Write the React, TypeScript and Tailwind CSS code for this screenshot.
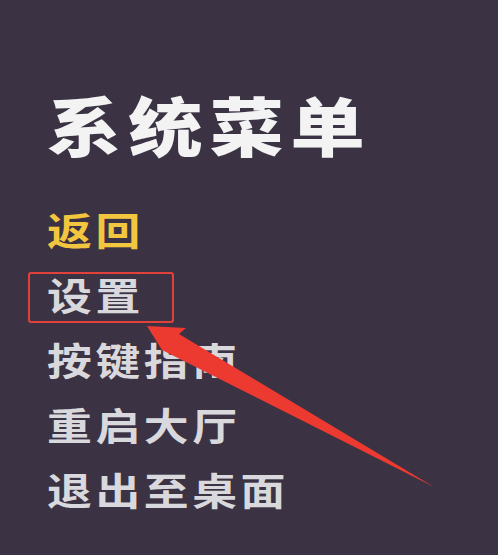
import React from "react";

const items = [
  { label: "返回", color: "text-[#f3c63f]" },
  { label: "设置", color: "text-[#d9d8dc]" },
  { label: "按键指南", color: "text-[#d9d8dc]" },
  { label: "重启大厅", color: "text-[#d9d8dc]" },
  { label: "退出至桌面", color: "text-[#d9d8dc]" },
];

export default function App() {
  return (
    <div
      className="relative w-[498px] h-[555px] overflow-hidden bg-[#3b3343] flex flex-col pl-[47px] pt-[83px]"
      style={{ fontFamily: '"Noto Sans CJK SC", "Noto Sans", sans-serif' }}
    >
      <h1 className="origin-left scale-x-[1.16] text-[64px] leading-[80px] font-black tracking-[6px] text-[#f3f3f3] whitespace-nowrap">
        系统菜单
      </h1>
      <ul className="mt-[33px] flex flex-col">
        {items.map((it) => (
          <li
            key={it.label}
            className={`origin-left scale-x-[1.18] text-[38px] leading-[65px] font-bold tracking-[3px] whitespace-nowrap ${it.color}`}
          >
            {it.label}
          </li>
        ))}
      </ul>

      {/* red highlight box around 设置 */}
      <div className="absolute left-[28px] top-[272px] w-[146px] h-[51px] border-2 border-[#e2413b] rounded-[3px]" />

      {/* red arrow */}
      <svg
        className="absolute left-0 top-0 pointer-events-none"
        width="498"
        height="555"
        viewBox="0 0 498 555"
      >
        <polygon
          points="147,326 186,328 179,334 434,487 162,350"
          fill="#ec3a31"
        />
      </svg>
    </div>
  );
}
